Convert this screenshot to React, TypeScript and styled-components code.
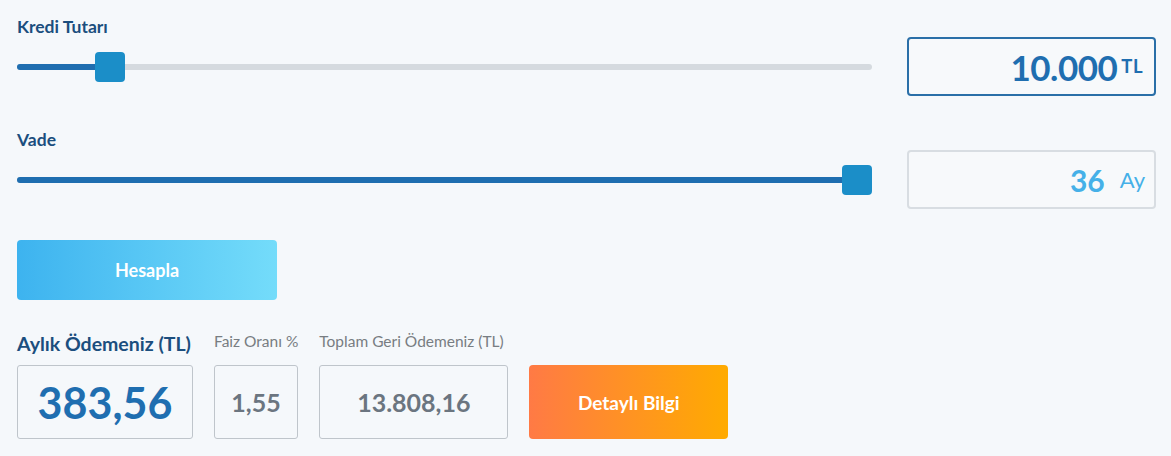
import styled, { createGlobalStyle, css } from 'styled-components'

const GlobalStyle = createGlobalStyle`
  html, body {
    margin: 0;
    padding: 0;
    background: #f5f8fb;
  }
  body {
    font-family: Lato, "Liberation Sans", sans-serif;
  }
`

const kredi = { value: 10000, min: 0, max: 106000 }
const vade = { value: 36, min: 3, max: 36 }

const pct = (s: { value: number; min: number; max: number }) => (s.value - s.min) / (s.max - s.min)

const App = () => {
  const k = pct(kredi)
  const v = pct(vade)
  return (
    <Container>
      <GlobalStyle />
      <Row>
        <SliderBlock>
          <Label>Kredi Tutarı</Label>
          <Track>
            <Fill style={{ width: `calc((100% - 30px) * ${k} + 15px)` }} />
            <Thumb style={{ left: `calc((100% - 30px) * ${k})` }} />
          </Track>
        </SliderBlock>
        <ValueBox active>
          <BigNum>10.000</BigNum>
          <Unit>TL</Unit>
        </ValueBox>
      </Row>

      <Row>
        <SliderBlock>
          <Label>Vade</Label>
          <Track>
            <Fill style={{ width: `calc((100% - 30px) * ${v} + 15px)` }} />
            <Thumb style={{ left: `calc((100% - 30px) * ${v})` }} />
          </Track>
        </SliderBlock>
        <ValueBox>
          <MonthNum>36</MonthNum>
          <MonthUnit>Ay</MonthUnit>
        </ValueBox>
      </Row>

      <Button kind="blue">Hesapla</Button>

      <Results>
        <Result>
          <ResultLabel main>Aylık Ödemeniz (TL)</ResultLabel>
          <ResultBox w={176}>
            <ResultValue main>383,56</ResultValue>
          </ResultBox>
        </Result>
        <Result>
          <ResultLabel>Faiz Oranı %</ResultLabel>
          <ResultBox w={84}>
            <ResultValue>1,55</ResultValue>
          </ResultBox>
        </Result>
        <Result>
          <ResultLabel>Toplam Geri Ödemeniz (TL)</ResultLabel>
          <ResultBox w={189}>
            <ResultValue>13.808,16</ResultValue>
          </ResultBox>
        </Result>
        <Button kind="orange">Detaylı Bilgi</Button>
      </Results>
    </Container>
  )
}

export default App

const Container = styled.div`
  width: 1171px;
  height: 456px;
  box-sizing: border-box;
  padding: 17px 15px 0 17px;
  display: flex;
  flex-direction: column;
`

const Row = styled.div`
  display: flex;
  align-items: flex-start;
  gap: 35px;
  & + & {
    margin-top: 34px;
  }
`

const SliderBlock = styled.div`
  width: 855px;
  display: flex;
  flex-direction: column;
`

const Label = styled.div`
  font-size: 17.5px;
  font-weight: 700;
  color: #1b4e7e;
  line-height: 20px;
`

const Track = styled.div`
  position: relative;
  height: 6px;
  margin-top: 27px;
  background: #d5dadf;
  border-radius: 3px;
`

const Fill = styled.div`
  height: 100%;
  background: #1f6eb0;
  border-radius: 3px 0 0 3px;
`

const Thumb = styled.div`
  position: absolute;
  top: -12px;
  width: 30px;
  height: 30px;
  border-radius: 4px;
  background: #1b8ec8;
`

const ValueBox = styled.div<{ active?: boolean }>`
  width: 249px;
  height: 59px;
  margin-top: 20px;
  box-sizing: border-box;
  display: flex;
  align-items: center;
  justify-content: flex-end;
  border-radius: 4px;
  background: #f7f9fb;
  ${({ active }) =>
    active
      ? css`
          border: 2px solid #2a6fa8;
          padding-right: 11px;
        `
      : css`
          border: 2px solid #d8dde2;
          padding-right: 9px;
        `}
`

const BigNum = styled.span`
  font-size: 35px;
  font-weight: 700;
  color: #1f6eb0;
  letter-spacing: -0.5px;
`

const Unit = styled.span`
  font-size: 18.5px;
  font-weight: 700;
  color: #1f6eb0;
  letter-spacing: 0.5px;
  margin-left: 4px;
  margin-bottom: 1px;
`

const MonthNum = styled.span`
  font-size: 30px;
  font-weight: 700;
  color: #45b0e8;
`

const MonthUnit = styled.span`
  font-size: 22px;
  font-weight: 400;
  color: #45b0e8;
  margin-left: 15px;
`

const Button = styled.button<{ kind: 'blue' | 'orange' }>`
  border: none;
  border-radius: 4px;
  color: #fff;
  font-family: Lato, "Liberation Sans", sans-serif;
  font-weight: 700;
  cursor: pointer;
  ${({ kind }) =>
    kind === 'blue'
      ? css`
          width: 260px;
          height: 60px;
          margin-top: 31px;
          font-size: 18px;
          background: linear-gradient(90deg, #3db3ef 0%, #74dcfa 100%);
        `
      : css`
          width: 199px;
          height: 74px;
          font-size: 19px;
          background: linear-gradient(90deg, #ff7a45 0%, #ffab00 100%);
        `}
`

const Results = styled.div`
  display: flex;
  align-items: flex-end;
  margin-top: 30px;
`

const Result = styled.div`
  display: flex;
  flex-direction: column;
  margin-right: 21px;
`

const ResultLabel = styled.div<{ main?: boolean }>`
  white-space: nowrap;
  line-height: 22px;
  ${({ main }) =>
    main
      ? css`
          font-size: 19.5px;
          font-weight: 700;
          color: #1b4e7e;
          margin-bottom: 10px;
        `
      : css`
          font-size: 15.5px;
          font-weight: 400;
          color: #787d82;
          margin-bottom: 13px;
        `}
`

const ResultBox = styled.div<{ w: number }>`
  width: ${({ w }) => w}px;
  height: 74px;
  box-sizing: border-box;
  border: 1px solid #bfc5cb;
  border-radius: 3px;
  display: flex;
  align-items: center;
  justify-content: center;
`

const ResultValue = styled.span<{ main?: boolean }>`
  font-weight: 700;
  ${({ main }) =>
    main
      ? css`
          font-size: 43px;
          color: #1f6eb0;
        `
      : css`
          font-size: 25px;
          color: #6b7580;
        `}
`
